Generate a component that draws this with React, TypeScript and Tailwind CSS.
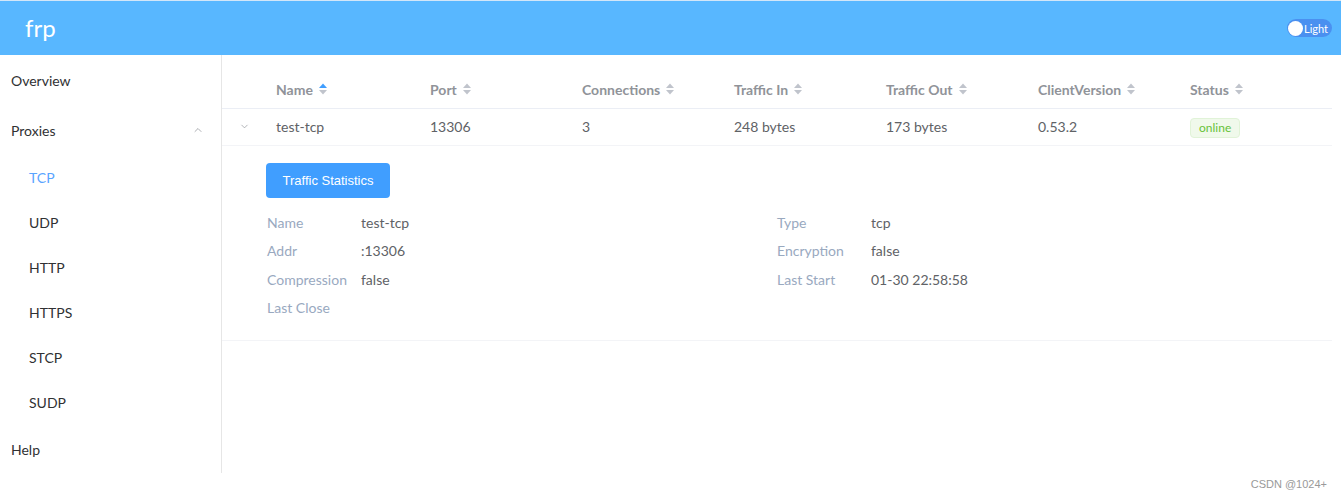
import { ChevronDown, ChevronUp } from "lucide-react";

const columns = [
  { key: "name", label: "Name", active: true, w: "w-[154px]" },
  { key: "port", label: "Port", w: "w-[152px]" },
  { key: "conns", label: "Connections", w: "w-[152px]" },
  { key: "in", label: "Traffic In", w: "w-[152px]" },
  { key: "out", label: "Traffic Out", w: "w-[152px]" },
  { key: "version", label: "ClientVersion", w: "w-[152px]" },
  { key: "status", label: "Status", w: "w-[152px]" },
] as const;

const proxyLinks = ["TCP", "UDP", "HTTP", "HTTPS", "STCP", "SUDP"];

const leftDetails = [
  ["Name", "test-tcp"],
  ["Addr", ":13306"],
  ["Compression", "false"],
  ["Last Close", ""],
];

const rightDetails = [
  ["Type", "tcp"],
  ["Encryption", "false"],
  ["Last Start", "01-30 22:58:58"],
];

function SortCaret({ active }: { active?: boolean }) {
  return (
    <svg width="10" height="14" viewBox="0 0 10 14" className="ml-[5px] inline-block">
      <path d="M1 6 L5 1.5 L9 6 Z" fill={active ? "#409eff" : "#c0c4cc"} />
      <path d="M1 8 L5 12.5 L9 8 Z" fill="#c0c4cc" />
    </svg>
  );
}

function DetailRow({ label, value }: { label: string; value: string }) {
  return (
    <div className="flex h-[28.5px] items-center">
      <span className="w-[94px] text-[#99a9bf]">{label}</span>
      <span className="text-[#606266]">{value}</span>
    </div>
  );
}

export default function App() {
  return (
    <div className="h-[496px] w-[1341px] bg-white text-[14px] font-['Lato','Noto_Sans',sans-serif]">
      <header className="flex h-[55px] items-center justify-between border-t border-[#d2e6f8] bg-[#58b7ff] pl-[25px] pr-[9px]">
        <span className="text-[24px] leading-none text-white">frp</span>
        <span className="flex h-[18px] items-center gap-[1px] rounded-full bg-[#4a90f0] pl-[1px] pr-[4px]">
          <span className="h-[15px] w-[15px] rounded-full bg-white" />
          <span className="text-[11px] leading-none text-white">Light</span>
        </span>
      </header>

      <div className="flex h-[418px]">
        <aside className="w-[222px] shrink-0 border-r border-[#e6e6e6] text-[#303133]">
          <div className="flex h-[50px] items-center pl-[11px]">Overview</div>
          <div className="flex h-[50px] items-center justify-between pl-[11px] pr-[17px]">
            <span>Proxies</span>
            <ChevronUp size={12} strokeWidth={1.5} className="text-[#909399]" />
          </div>
          {proxyLinks.map((p) => (
            <div
              key={p}
              className={`flex h-[45px] items-center pl-[29px] ${p === "TCP" ? "text-[#5aa4ff]" : ""}`}
            >
              {p}
            </div>
          ))}
          <div className="flex h-[48px] items-center pl-[11px]">Help</div>
        </aside>

        <main className="flex-1 pr-[9px] pt-[15px]">
          <div className="flex h-[39px] items-center border-b border-[#ebeef5] font-bold text-[#909399]">
            <div className="w-[42px]" />
            {columns.map((c) => (
              <div key={c.key} className={`flex ${c.w} items-center pl-[12px]`}>
                {c.label}
                <SortCaret active={"active" in c && c.active} />
              </div>
            ))}
          </div>

          <div className="flex h-[37px] items-center border-b border-[#f3f4f7] pb-[1px] text-[#606266]">
            <div className="flex w-[42px] justify-center pl-[2px]">
              <ChevronDown size={11} strokeWidth={1.5} className="text-[#909399]" />
            </div>
            <div className="w-[154px] pl-[12px]">test-tcp</div>
            <div className="w-[152px] pl-[12px]">13306</div>
            <div className="w-[152px] pl-[12px]">3</div>
            <div className="w-[152px] pl-[12px]">248 bytes</div>
            <div className="w-[152px] pl-[12px]">173 bytes</div>
            <div className="w-[152px] pl-[12px]">0.53.2</div>
            <div className="w-[152px] pl-[12px]">
              <span className="inline-flex h-[20px] items-center rounded-[4px] border border-[#e1f3d8] bg-[#f0f9eb] px-[8px] text-[12px] text-[#67c23a]">
                online
              </span>
            </div>
          </div>

          <div className="border-b border-[#f3f4f7] pb-[18px] pl-[44px] pt-[17px]">
            <button
              type="button"
              className="h-[35px] w-[124px] rounded-[4px] bg-[#409eff] text-[13px] text-white font-['Liberation_Sans',sans-serif]"
            >
              Traffic Statistics
            </button>
            <div className="mt-[10px] flex pl-[1px]">
              <div className="w-[510px]">
                {leftDetails.map(([l, v]) => (
                  <DetailRow key={l} label={l} value={v} />
                ))}
              </div>
              <div>
                {rightDetails.map(([l, v]) => (
                  <DetailRow key={l} label={l} value={v} />
                ))}
              </div>
            </div>
          </div>
        </main>
      </div>

      <div className="flex h-[23px] items-center justify-end pr-[14px] text-[11px] text-[#999] font-['Liberation_Sans',sans-serif]">
        CSDN @1024+
      </div>
    </div>
  );
}
